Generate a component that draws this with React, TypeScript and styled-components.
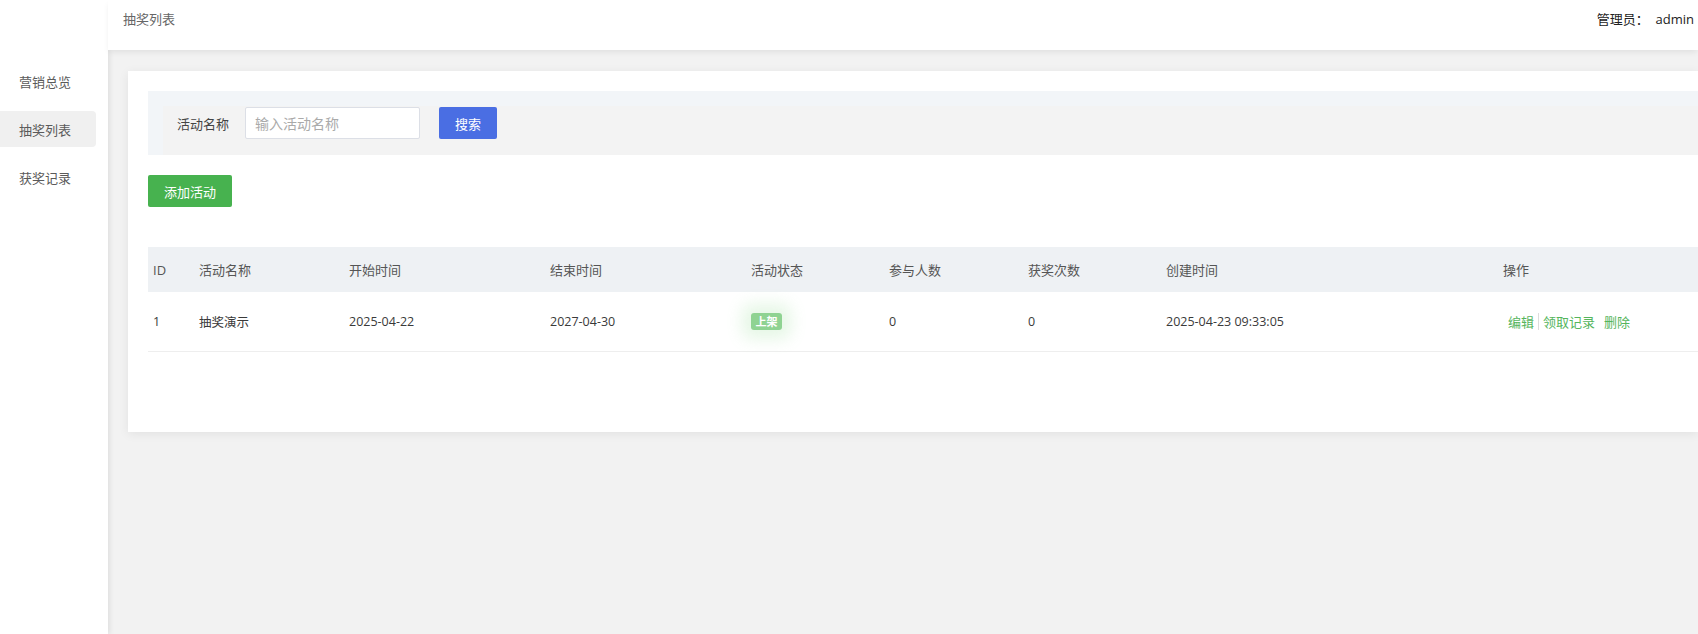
import React from 'react';
import styled, { createGlobalStyle } from 'styled-components';

const GlobalStyle = createGlobalStyle`
  html, body {
    margin: 0;
    padding: 0;
    background: #f2f2f2;
  }
  body {
    font-family: 'Open Sans', 'Noto Sans CJK SC', sans-serif;
    font-size: 14px;
    color: #333;
  }
  * {
    box-sizing: border-box;
  }
`;

interface Activity {
  id: number;
  name: string;
  start: string;
  end: string;
  status: string;
  joined: number;
  wins: number;
  created: string;
}

const activities: Activity[] = [
  {
    id: 1,
    name: '抽奖演示',
    start: '2025-04-22',
    end: '2027-04-30',
    status: '上架',
    joined: 0,
    wins: 0,
    created: '2025-04-23 09:33:05',
  },
];

const menu = ['营销总览', '抽奖列表', '获奖记录'];

const columns = [
  { title: 'ID', width: 46 },
  { title: '活动名称', width: 150 },
  { title: '开始时间', width: 201 },
  { title: '结束时间', width: 201 },
  { title: '活动状态', width: 138 },
  { title: '参与人数', width: 139 },
  { title: '获奖次数', width: 138 },
  { title: '创建时间', width: 337 },
  { title: '操作', width: 200 },
];

export default function App() {
  return (
    <>
      <GlobalStyle />
      <Layout>
        <Sidebar>
          {menu.map((item) => (
            <MenuItem key={item} active={item === '抽奖列表'}>
              {item}
            </MenuItem>
          ))}
        </Sidebar>
        <MainColumn>
          <Header>
            <PageTitle>抽奖列表</PageTitle>
            <UserInfo>管理员：&nbsp; admin</UserInfo>
          </Header>
          <Content>
            <Card>
              <SearchBar>
                <SearchForm>
                  <FieldLabel>活动名称</FieldLabel>
                  <TextInput placeholder="输入活动名称" />
                  <Button color="#4a6ee3" width={58}>
                    搜索
                  </Button>
                </SearchForm>
              </SearchBar>
              <Toolbar>
                <Button color="#47b24f" width={84}>
                  添加活动
                </Button>
              </Toolbar>
              <Table>
                <colgroup>
                  {columns.map((c) => (
                    <col key={c.title} style={{ width: c.width }} />
                  ))}
                </colgroup>
                <thead>
                  <tr>
                    {columns.map((c) => (
                      <HeadCell key={c.title}>{c.title}</HeadCell>
                    ))}
                  </tr>
                </thead>
                <tbody>
                  {activities.map((a) => (
                    <tr key={a.id}>
                      <Cell>{a.id}</Cell>
                      <Cell>{a.name}</Cell>
                      <Cell>{a.start}</Cell>
                      <Cell>{a.end}</Cell>
                      <Cell>
                        <StatusBadge>{a.status}</StatusBadge>
                      </Cell>
                      <Cell>{a.joined}</Cell>
                      <Cell>{a.wins}</Cell>
                      <Cell>{a.created}</Cell>
                      <Cell>
                        <Actions>
                          <ActionLink>编辑</ActionLink>
                          <ActionDivider />
                          <ActionLink>领取记录</ActionLink>
                          <ActionLink>删除</ActionLink>
                        </Actions>
                      </Cell>
                    </tr>
                  ))}
                </tbody>
              </Table>
            </Card>
          </Content>
        </MainColumn>
      </Layout>
    </>
  );
}

const Layout = styled.div`
  display: flex;
  min-height: 100vh;
  overflow: hidden;
`;

const Sidebar = styled.aside`
  width: 108px;
  flex-shrink: 0;
  background: #fff;
  padding-top: 63px;
  display: flex;
  flex-direction: column;
  gap: 12px;
  box-shadow: 2px 0 5px rgba(0, 0, 0, 0.08);
  position: relative;
  z-index: 1;
`;

const MenuItem = styled.div<{ active?: boolean }>`
  width: 96px;
  height: 36px;
  padding-left: 19px;
  display: flex;
  align-items: center;
  font-family: 'Noto Sans CJK SC', sans-serif;
  font-size: 13px;
  color: #5a5a5a;
  border-radius: 0 4px 4px 0;
  background: ${({ active }) => (active ? '#f0f0f0' : 'transparent')};
`;

const MainColumn = styled.div`
  flex: 1;
  min-width: 0;
  display: flex;
  flex-direction: column;
`;

const Header = styled.header`
  height: 50px;
  background: #fff;
  display: flex;
  justify-content: space-between;
  align-items: flex-start;
  padding: 9px 4px 0 15px;
  box-shadow: 0 3px 6px -1px rgba(0, 0, 0, 0.08);
  position: relative;
  z-index: 2;
`;

const PageTitle = styled.div`
  font-family: 'Noto Sans CJK SC', sans-serif;
  font-size: 13px;
  line-height: 20px;
  color: #666;
`;

const UserInfo = styled.div`
  font-family: 'Open Sans', 'Noto Sans CJK SC', sans-serif;
  font-size: 13px;
  line-height: 20px;
  color: #222;
`;

const Content = styled.main`
  flex: 1;
  padding: 21px 0 20px 20px;
`;

const Card = styled.section`
  background: #fff;
  padding: 20px 0 80px 20px;
  box-shadow: 0 2px 10px rgba(0, 0, 0, 0.07);
`;

const SearchBar = styled.div`
  background: #f2f5f8;
  padding: 15px 0 0 15px;
`;

const SearchForm = styled.div`
  background: #f3f3f3;
  display: flex;
  align-items: center;
  padding: 1px 0 16px 14px;
`;

const FieldLabel = styled.label`
  font-family: 'Noto Sans CJK SC', sans-serif;
  font-size: 13px;
  color: #444;
  margin-right: 16px;
`;

const TextInput = styled.input`
  width: 175px;
  height: 32px;
  border: 1px solid #dcdfe6;
  border-radius: 2px;
  background: #fff;
  padding: 0 9px;
  font-family: 'Noto Sans CJK SC', sans-serif;
  font-size: 14px;
  outline: none;
  margin-right: 19px;

  &::placeholder {
    color: #aaa;
  }
`;

const Button = styled.button<{ color: string; width: number }>`
  width: ${({ width }) => width}px;
  height: 32px;
  border: none;
  border-radius: 2px;
  background: ${({ color }) => color};
  color: #fff;
  font-family: 'Noto Sans CJK SC', sans-serif;
  font-size: 13px;
  padding: 0;
  cursor: pointer;
`;

const Toolbar = styled.div`
  padding: 20px 0 40px;
  display: flex;
`;

const Table = styled.table`
  width: 100%;
  table-layout: fixed;
  border-collapse: collapse;
`;

const HeadCell = styled.th`
  height: 45px;
  background: #eef1f4;
  text-align: left;
  font-weight: normal;
  font-family: 'Open Sans', 'Noto Sans CJK SC', sans-serif;
  font-size: 13px;
  color: #555;
  padding: 0 5px;
`;

const Cell = styled.td`
  height: 59px;
  border-bottom: 1px solid #eeeeee;
  font-family: 'Open Sans', 'Noto Sans CJK SC', sans-serif;
  font-size: 12.5px;
  color: #3a3a3a;
  padding: 0 5px;
  white-space: nowrap;
`;

const StatusBadge = styled.span`
  display: inline-flex;
  align-items: center;
  justify-content: center;
  width: 31px;
  height: 17px;
  border-radius: 3px;
  background: #8fd392;
  color: #fff;
  font-family: 'Noto Sans CJK SC', sans-serif;
  font-size: 11px;
  font-weight: bold;
  box-shadow: 0 0 16px 9px rgba(130, 215, 130, 0.2);
`;

const Actions = styled.div`
  display: flex;
  align-items: center;
  padding-left: 5px;
`;

const ActionLink = styled.a`
  font-family: 'Noto Sans CJK SC', sans-serif;
  font-size: 13px;
  color: #55b55c;
  cursor: pointer;
  & + & {
    margin-left: 9px;
  }
`;

const ActionDivider = styled.span`
  width: 1px;
  height: 17px;
  background: #dddddd;
  margin: 0 4px 0 4px;

  & + ${ActionLink} {
    margin-left: 0;
  }
`;
